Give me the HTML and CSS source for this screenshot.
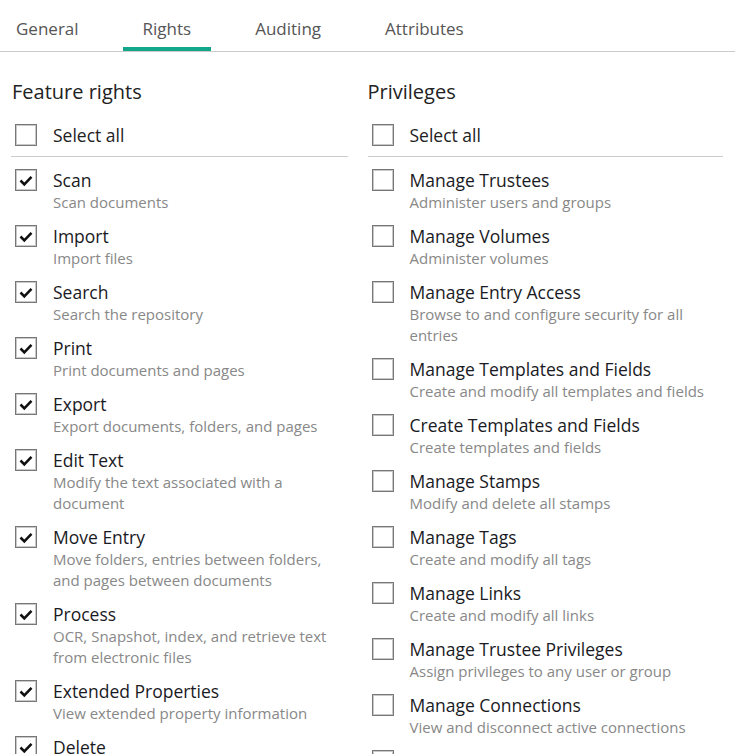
FILE: index.html
```html
<!DOCTYPE html>
<html lang="en">
<head>
  <meta charset="UTF-8">
  <title>Rights</title>
  <link rel="stylesheet" href="styles.css">
</head>
<body>
  <nav class="tabs">
    <span class="tab">General</span>
    <span class="tab active">Rights</span>
    <span class="tab">Auditing</span>
    <span class="tab">Attributes</span>
  </nav>
  <div class="columns">
    <section class="col col-left">
      <h2>Feature rights</h2>
      <div class="select-all">
        <span class="box"></span>
        <span class="label">Select all</span>
      </div>
      <ul class="list">
        <li class="item"><span class="box checked"><svg viewBox="0 0 20 20"><path d="M4.5 10.5l3.8 3.8 7.2-7.4"/></svg></span><div><div class="title">Scan</div><div class="desc">Scan documents</div></div></li>
        <li class="item"><span class="box checked"><svg viewBox="0 0 20 20"><path d="M4.5 10.5l3.8 3.8 7.2-7.4"/></svg></span><div><div class="title">Import</div><div class="desc">Import files</div></div></li>
        <li class="item"><span class="box checked"><svg viewBox="0 0 20 20"><path d="M4.5 10.5l3.8 3.8 7.2-7.4"/></svg></span><div><div class="title">Search</div><div class="desc">Search the repository</div></div></li>
        <li class="item"><span class="box checked"><svg viewBox="0 0 20 20"><path d="M4.5 10.5l3.8 3.8 7.2-7.4"/></svg></span><div><div class="title">Print</div><div class="desc">Print documents and pages</div></div></li>
        <li class="item"><span class="box checked"><svg viewBox="0 0 20 20"><path d="M4.5 10.5l3.8 3.8 7.2-7.4"/></svg></span><div><div class="title">Export</div><div class="desc">Export documents, folders, and pages</div></div></li>
        <li class="item"><span class="box checked"><svg viewBox="0 0 20 20"><path d="M4.5 10.5l3.8 3.8 7.2-7.4"/></svg></span><div><div class="title">Edit Text</div><div class="desc">Modify the text associated with a document</div></div></li>
        <li class="item"><span class="box checked"><svg viewBox="0 0 20 20"><path d="M4.5 10.5l3.8 3.8 7.2-7.4"/></svg></span><div><div class="title">Move Entry</div><div class="desc">Move folders, entries between folders, and pages between documents</div></div></li>
        <li class="item"><span class="box checked"><svg viewBox="0 0 20 20"><path d="M4.5 10.5l3.8 3.8 7.2-7.4"/></svg></span><div><div class="title">Process</div><div class="desc">OCR, Snapshot, index, and retrieve text from electronic files</div></div></li>
        <li class="item"><span class="box checked"><svg viewBox="0 0 20 20"><path d="M4.5 10.5l3.8 3.8 7.2-7.4"/></svg></span><div><div class="title">Extended Properties</div><div class="desc">View extended property information</div></div></li>
        <li class="item"><span class="box checked"><svg viewBox="0 0 20 20"><path d="M4.5 10.5l3.8 3.8 7.2-7.4"/></svg></span><div><div class="title">Delete</div><div class="desc">Delete entries</div></div></li>
      </ul>
    </section>
    <section class="col col-right">
      <h2>Privileges</h2>
      <div class="select-all">
        <span class="box"></span>
        <span class="label">Select all</span>
      </div>
      <ul class="list">
        <li class="item"><span class="box"></span><div><div class="title">Manage Trustees</div><div class="desc">Administer users and groups</div></div></li>
        <li class="item"><span class="box"></span><div><div class="title">Manage Volumes</div><div class="desc">Administer volumes</div></div></li>
        <li class="item"><span class="box"></span><div><div class="title">Manage Entry Access</div><div class="desc">Browse to and configure security for all entries</div></div></li>
        <li class="item"><span class="box"></span><div><div class="title">Manage Templates and Fields</div><div class="desc">Create and modify all templates and fields</div></div></li>
        <li class="item"><span class="box"></span><div><div class="title">Create Templates and Fields</div><div class="desc">Create templates and fields</div></div></li>
        <li class="item"><span class="box"></span><div><div class="title">Manage Stamps</div><div class="desc">Modify and delete all stamps</div></div></li>
        <li class="item"><span class="box"></span><div><div class="title">Manage Tags</div><div class="desc">Create and modify all tags</div></div></li>
        <li class="item"><span class="box"></span><div><div class="title">Manage Links</div><div class="desc">Create and modify all links</div></div></li>
        <li class="item"><span class="box"></span><div><div class="title">Manage Trustee Privileges</div><div class="desc">Assign privileges to any user or group</div></div></li>
        <li class="item"><span class="box"></span><div><div class="title">Manage Connections</div><div class="desc">View and disconnect active connections</div></div></li>
        <li class="item"><span class="box"></span><div><div class="title">Manage Audit Trail</div><div class="desc">Configure audit settings</div></div></li>
      </ul>
    </section>
  </div>
</body>
</html>
```

FILE: styles.css
```css
body {
  font-family: 'Open Sans', sans-serif;
  margin: 0;
  padding: 0;
  background-color: #fff;
  color: #222;
  overflow: hidden;
}
.tabs {
  display: flex;
  gap: 24px;
  border-bottom: 1px solid #ccc;
}
.tab {
  padding: 18px 20px 7px;
  font-size: 17px;
  line-height: 22px;
  color: #555;
  border-bottom: 4px solid transparent;
}
.tab:first-child {
  padding-left: 16px;
}
.tab.active {
  border-bottom-color: #12a68a;
}
.columns {
  display: grid;
  grid-template-columns: 1fr 1fr;
}
.col-left {
  padding: 0 20px 0 11px;
}
.col-left h2 {
  margin-left: 1px;
}
.col-right {
  padding: 0 12px 0 0;
}
h2 {
  margin: 26px 0 18px;
  font-size: 20px;
  font-weight: normal;
  line-height: 28px;
}
.select-all {
  display: flex;
  align-items: center;
  gap: 16px;
  padding: 0 0 10px 4px;
  border-bottom: 1px solid #ccc;
}
.label {
  font-size: 17.5px;
  line-height: 22px;
}
.box {
  flex: none;
  width: 22px;
  height: 22px;
  box-sizing: border-box;
  border: 1px solid #777;
  box-shadow: inset 0 0 0 1px #c9c9c9;
  display: flex;
  align-items: center;
  justify-content: center;
}
.box svg {
  width: 20px;
  height: 20px;
  fill: none;
  stroke: #111;
  stroke-width: 2.6;
}
.list {
  list-style: none;
  margin: 12px 0 0;
  padding: 0;
}
.item {
  display: flex;
  align-items: flex-start;
  gap: 16px;
  padding-left: 4px;
  margin-bottom: 12px;
}
.title {
  font-size: 17.5px;
  line-height: 23px;
  color: #1a1a24;
}
.desc {
  font-size: 15px;
  line-height: 21px;
  color: #888;
}
```
